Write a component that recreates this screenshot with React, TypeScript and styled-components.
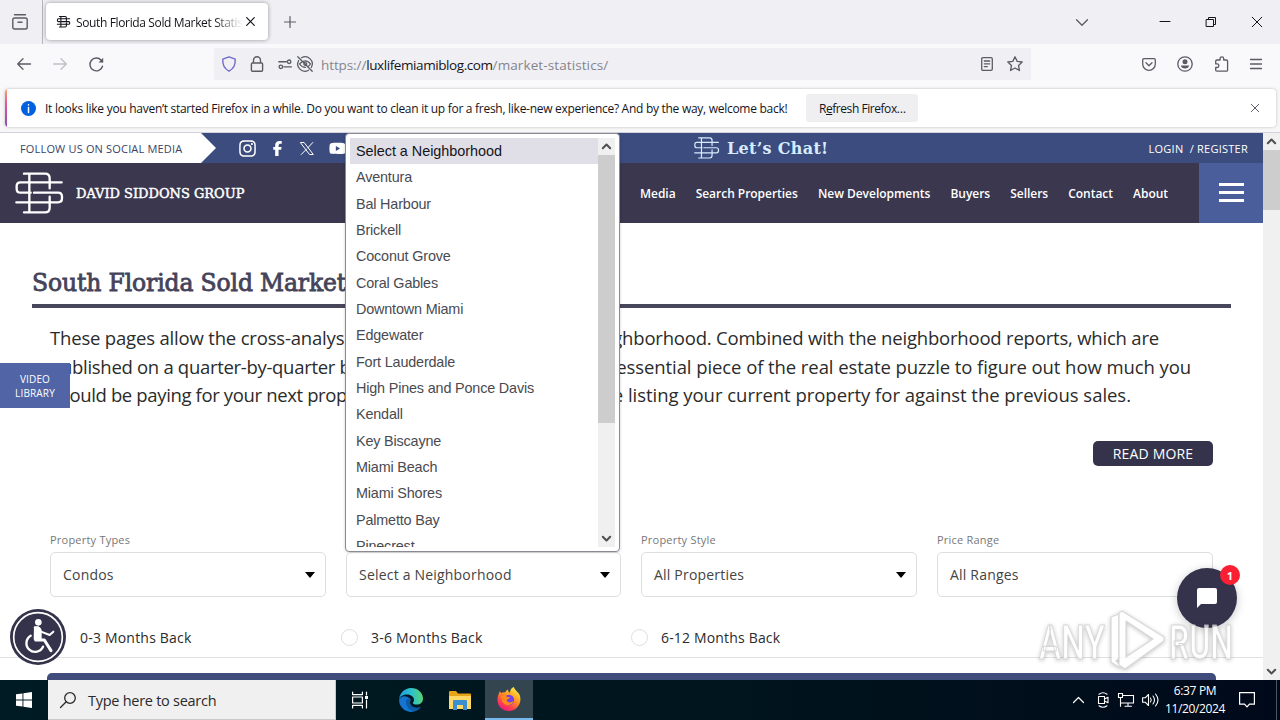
import React from "react"
import styled, { createGlobalStyle } from "styled-components"
import { FaInstagram, FaFacebookF, FaYoutube } from "react-icons/fa6"

const GlobalStyle = createGlobalStyle`
  * {
    box-sizing: border-box;
  }

  body {
    margin: 0;
    width: 1280px;
    height: 720px;
    overflow: hidden;
    background: #fff;
    font-family: "Open Sans", "Noto Sans", sans-serif;
  }
`

const Screen = styled.div`
  display: flex;
  flex-direction: column;
  width: 1280px;
  height: 720px;
  overflow: hidden;
`

const Text = styled.span<{ $size: number; $track?: number; $weight?: number; $color?: string }>`
  font-size: ${p => p.$size}px;
  letter-spacing: ${p => p.$track || 0}px;
  font-weight: ${p => p.$weight || 400};
  color: ${p => p.$color || "inherit"};
  white-space: pre;
`

const Svg = styled.svg`
  display: block;
  flex: none;
  overflow: visible;
  fill: none;
  stroke: currentColor;
  stroke-linecap: round;
  stroke-linejoin: round;
`

/* ---------- browser ---------- */

const TabStrip = styled.div`
  display: flex;
  flex: none;
  height: 44px;
  background: #f0f0f4;
  color: #5b5b66;
`

const FirefoxView = styled.div`
  display: flex;
  align-items: center;
  width: 43px;
  padding-left: 12px;
  border-right: 1px solid #b5b5bd;
`

const Tab = styled.div`
  display: flex;
  align-items: center;
  width: 222px;
  height: 37px;
  margin: 3px 0 0 3px;
  padding: 0 12px 0 11px;
  border-radius: 4px;
  background: #fff;
  box-shadow: 0 0 4px rgba(0, 0, 0, 0.38);
  color: #15141a;
`

const TabTitle = styled.div`
  width: 170px;
  margin-left: 6px;
  overflow: hidden;
  line-height: 18px;
  mask-image: linear-gradient(to right, #000 138px, transparent 167px);
`

const NewTab = styled.div`
  display: flex;
  align-items: center;
  margin-left: 16px;
`

const WindowButtons = styled.div`
  display: flex;
  align-items: center;
  margin-left: auto;
  padding-right: 18px;
  color: #15141a;
`

const Toolbar = styled.div`
  display: flex;
  flex: none;
  align-items: center;
  height: 44px;
  padding: 0 18px 4px 17px;
  background: #f9f9fb;
  color: #5b5b66;
`

const ToolGroup = styled.div<{ $gap: number }>`
  display: flex;
  align-items: center;
  gap: ${p => p.$gap}px;
`

const UrlBar = styled.div`
  display: flex;
  align-items: center;
  width: 817px;
  height: 32px;
  margin-left: 110px;
  padding: 0 8px 0 7px;
  border-radius: 2px;
  background: #f0f0f4;
`

const Url = styled.div`
  margin-left: 8px;
  color: #85858d;
`

const NoticeArea = styled.div`
  flex: none;
  height: 45px;
  padding: 1px 4px 0 5px;
  background: #f7f7f8;
  border-bottom: 1px solid #d2d3da;
`

const Notice = styled.div`
  position: relative;
  display: flex;
  align-items: center;
  height: 38px;
  padding: 0 17px 0 16px;
  background: #fff;
  border-radius: 4px;
  box-shadow: 0 0 3px rgba(0, 0, 0, 0.25);
  color: #15141a;
  overflow: hidden;

  &::before {
    content: "";
    position: absolute;
    left: 0;
    top: 0;
    width: 2px;
    height: 100%;
    background: linear-gradient(#f6a26b, #e2559a 40%, #8b4cc4);
  }
`

const NoticeButton = styled.div`
  width: 112px;
  height: 28px;
  margin-left: 19px;
  line-height: 27px;
  text-align: center;
  border-radius: 3px;
  background: #efeff1;
`

/* ---------- page ---------- */

const Viewport = styled.div`
  position: relative;
  display: flex;
  flex: none;
  height: 547px;
  overflow: hidden;
`

const Page = styled.div`
  width: 1263px;
  background: #fff;
`

const TopBar = styled.div`
  display: flex;
  height: 30px;
  background: #3c4c7e;
  color: #fff;
`

const Follow = styled.div`
  width: 216px;
  padding-left: 20px;
  line-height: 29px;
  background: #fff;
  color: #3a3f68;
  clip-path: polygon(0 0, 201px 0, 216px 50%, 201px 100%, 0 100%);
`

const Social = styled.div`
  display: grid;
  grid-template-columns: repeat(4, 30px);
  align-items: center;
  justify-items: center;
  width: 462px;
  margin-left: 16px;
`

const LetsChat = styled.div`
  display: flex;
  align-items: center;
  gap: 8px;
  color: #d6ecff;
`

const Slab = styled(Text)<{ $stroke?: number }>`
  font-family: "DejaVu Serif", serif;
  -webkit-text-stroke: ${p => p.$stroke || 0}px currentColor;
`

const Login = styled.div`
  margin-left: auto;
  padding-right: 15px;
  line-height: 29px;
`

const Header = styled.div`
  display: flex;
  align-items: center;
  height: 60px;
  background: #3a374f;
  color: #fff;
`

const Brand = styled.div`
  display: flex;
  align-items: center;
  gap: 13px;
  width: 640px;
  padding-left: 15px;
`

const Nav = styled.div`
  display: flex;
  flex: 1;
  justify-content: space-between;
  padding: 1px 31px 0 0;
`

const MenuButton = styled.div`
  display: flex;
  flex-direction: column;
  align-items: center;
  justify-content: center;
  gap: 5px;
  width: 64px;
  height: 60px;
  padding-bottom: 1px;
  background: #4a5e9c;
`

const MenuLine = styled.div`
  width: 25px;
  height: 3px;
  background: #fff;
`

const Title = styled.div`
  height: 85px;
  width: 1199px;
  margin-left: 32px;
  padding-top: 43px;
  line-height: 34px;
  border-bottom: 4px solid #47465a;
  color: #45435a;
`

const Intro = styled.div`
  margin: 16px 0 0 50px;
  color: #2b2b2b;
`

const IntroLine = styled.div<{ $width: number }>`
  display: flex;
  justify-content: space-between;
  width: ${p => p.$width}px;
  height: 28.5px;
  line-height: 28.5px;
`

const ReadMore = styled.div`
  width: 120px;
  height: 25px;
  margin: 31.5px 0 0 1093px;
  line-height: 25px;
  text-align: center;
  border-radius: 5px;
  background: #35334c;
  color: #fff;
`

const Filters = styled.div`
  display: grid;
  grid-template-columns: 276px 275px 276px 276px;
  gap: 20px;
  margin: 64px 0 0 50px;
`

const FilterLabel = styled.div`
  height: 22px;
  line-height: 17px;
  color: #777;
`

const Select = styled.div`
  display: flex;
  align-items: center;
  justify-content: space-between;
  height: 45px;
  padding: 0 10px 0 12px;
  border: 1px solid #dedede;
  border-radius: 5px;
  color: #444;
`

const Caret = styled.div`
  border: 5px solid transparent;
  border-top: 6px solid #000;
  border-bottom: 0;
`

const Periods = styled.div`
  display: flex;
  align-items: center;
  height: 61px;
  padding: 21px 0 0 80px;
  border-bottom: 1px solid #e0e0e0;
  color: #2b2b2b;
`

const Period = styled.div<{ $width: number }>`
  display: flex;
  align-items: center;
  gap: 13px;
  width: ${p => p.$width}px;
`

const Radio = styled.div`
  width: 17px;
  height: 17px;
  border: 1px solid #dedede;
  border-radius: 50%;
`

const Panel = styled.div`
  width: 1169px;
  height: 20px;
  margin: 15px 0 0 47px;
  border-radius: 5px;
  background: #3f4c7c;
`

const PageScroll = styled.div`
  display: flex;
  flex-direction: column;
  align-items: center;
  width: 17px;
  padding: 5px 0;
  background: #f0f0f0;
  color: #505050;
`

const Thumb = styled.div<{ $height: number }>`
  width: 17px;
  height: ${p => p.$height}px;
  margin: 6px 0 auto;
  background: #cdcdcd;
`

/* ---------- floating parts ---------- */

const Dropdown = styled.div`
  position: absolute;
  left: 345px;
  top: 0;
  display: flex;
  width: 275px;
  height: 419px;
  padding: 4px;
  border: 1px solid #8a8a93;
  border-radius: 4px;
  background: #fff;
  box-shadow: 0 0 3px rgba(0, 0, 0, 0.2);
`

const Options = styled.div`
  flex: 1;
  height: 409px;
  overflow: hidden;
  font-family: "Liberation Sans", Arial, sans-serif;
  color: #4a4a50;
`

const Option = styled.div<{ $selected: boolean }>`
  height: 26.35px;
  padding-left: 6px;
  line-height: 25.5px;
  background: ${p => (p.$selected ? "#e0dfe7" : "transparent")};
  color: ${p => (p.$selected ? "#15141a" : "inherit")};
`

const OptionScroll = styled(PageScroll)`
  height: 409px;
`

const VideoLibrary = styled.div`
  position: absolute;
  left: 0;
  top: 230px;
  width: 70px;
  height: 45px;
  padding-top: 9px;
  text-align: center;
  font-size: 10px;
  line-height: 14px;
  background: #5165a6;
  color: #fff;
`

const Accessibility = styled.div`
  position: absolute;
  left: 10px;
  top: 476px;
`

const Chat = styled.div`
  position: absolute;
  left: 1177px;
  top: 435px;
  display: flex;
  align-items: center;
  justify-content: center;
  width: 60px;
  height: 60px;
  border-radius: 50%;
  background: #35334c;
  box-shadow: 0 2px 10px rgba(0, 0, 0, 0.22);
`

const Badge = styled.div`
  position: absolute;
  right: -3px;
  top: -3px;
  width: 20px;
  height: 20px;
  border-radius: 50%;
  background: #fa1f33;
  color: #fff;
  line-height: 18px;
  text-align: center;
`

const Watermark = styled.div`
  position: absolute;
  left: 1036px;
  top: 475px;
  opacity: 0.75;

  text {
    font-family: "Roboto", sans-serif;
    font-size: 49px;
    font-weight: 500;
  }
`

/* ---------- taskbar ---------- */

const Taskbar = styled.div`
  display: flex;
  flex: none;
  height: 40px;
  background: linear-gradient(to right, #001b24, #00141d 60%, #00091a);
  color: #fff;
`

const TaskButton = styled.div<{ $width: number; $active?: boolean }>`
  display: flex;
  align-items: center;
  justify-content: center;
  width: ${p => p.$width}px;
  height: 40px;
  background: ${p => (p.$active ? "#33464f" : "transparent")};
  border-bottom: ${p => (p.$active ? "2px solid #76b9ed" : "0")};
`

const Search = styled.div`
  display: flex;
  align-items: center;
  gap: 12px;
  width: 288px;
  padding: 1px 0 0 12px;
  background: #f0f0f0;
  border: 1px solid #c9c9c9;
  border-top: 0;
  border-left: 0;
  color: #2a2a2a;
`

const Tray = styled.div`
  display: flex;
  align-items: center;
  gap: 8px;
  margin-left: auto;
`

const Clock = styled.div`
  display: flex;
  flex-direction: column;
  align-items: center;
  justify-content: space-between;
  width: 62px;
  height: 36px;
  margin-left: -3px;
  line-height: 18px;
`

const neighborhoods = [
  "Select a Neighborhood",
  "Aventura",
  "Bal Harbour",
  "Brickell",
  "Coconut Grove",
  "Coral Gables",
  "Downtown Miami",
  "Edgewater",
  "Fort Lauderdale",
  "High Pines and Ponce Davis",
  "Kendall",
  "Key Biscayne",
  "Miami Beach",
  "Miami Shores",
  "Palmetto Bay",
  "Pinecrest",
]

const navLinks = ["Media", "Search Properties", "New Developments", "Buyers", "Sellers", "Contact", "About"]

const filters = [
  { label: "Property Types", value: "Condos", caret: true },
  { label: "Neighborhood", value: "Select a Neighborhood", caret: true },
  { label: "Property Style", value: "All Properties", caret: true },
  { label: "Price Range", value: "All Ranges", caret: false },
]

const introLines = [
  {
    width: 1109,
    start: "These pages allow the cross-analysis",
    startTrack: -0.18,
    end: "neighborhood. Combined with the neighborhood reports, which are",
    endTrack: -0.2,
  },
  {
    width: 1141,
    start: "published on a quarter-by-quarter basis",
    startTrack: -0.3,
    end: "essential piece of the real estate puzzle to figure out how much you",
    endTrack: -0.08,
  },
  {
    width: 1081,
    start: "should be paying for your next property",
    startTrack: -0.36,
    end: "be listing your current property for against the previous sales.",
    endTrack: -0.03,
  },
]

function Monogram({ width, weight = 7 }: { width: number; weight?: number }) {
  return (
    <Svg width={width} height={width * 0.875} viewBox="46 126 144 126" strokeWidth={weight}>
      <path d="M73 131h63q14 0 14 14v30M150 200v33q0 14-14 14H73M89 131v116" />
      <path d="M186 157H62q-11 0-11 11v8q0 12 12 12h30M103 188h72q12 0 12 12v5q0 12-12 12H50" />
    </Svg>
  )
}

function ScrollArrow({ down }: { down?: boolean }) {
  return (
    <Svg width="9" height="6" viewBox="0 0 9 6" strokeWidth="2" strokeLinecap="butt">
      <path d={down ? "M.8.8l3.7 3.7L8.2.8" : "M.8 5.2l3.7-3.7 3.7 3.7"} />
    </Svg>
  )
}

function BrowserChrome() {
  return (
    <>
      <TabStrip>
        <FirefoxView>
          <Svg width="16" height="16" viewBox="0 0 16 16" strokeWidth="1.4">
            <path d="M2.5.8h11M2.6 4h10.8q1.8 0 1.8 1.8v7.4q0 1.8-1.8 1.8H2.6q-1.8 0-1.8-1.8V5.8Q.8 4 2.6 4zM6 8.3h4" />
          </Svg>
        </FirefoxView>
        <Tab>
          <Monogram width={13} weight={12} />
          <TabTitle>
            <Text $size={12} $track={-0.36}>South Florida Sold Market Statistics</Text>
          </TabTitle>
          <Svg width="9" height="9" viewBox="0 0 9 9" strokeWidth="1.2">
            <path d="M.7.7l7.6 7.6M8.3.7L.7 8.3" />
          </Svg>
        </Tab>
        <NewTab>
          <Svg width="12" height="12" viewBox="0 0 12 12" strokeWidth="1.2">
            <path d="M6 .5v11M.5 6h11" />
          </Svg>
        </NewTab>
        <WindowButtons>
          <Svg width="12" height="7" viewBox="0 0 12 7" strokeWidth="1.3" style={{ color: "#5b5b66", marginRight: 72 }}>
            <path d="M.5.7L6 6.2 11.5.7" />
          </Svg>
          <Svg width="10" height="10" viewBox="0 0 10 10" style={{ marginRight: 36 }}>
            <path d="M0 4.5h10" />
          </Svg>
          <Svg width="10" height="10" viewBox="0 0 10 10" style={{ marginRight: 36 }}>
            <path d="M.5 2.5h7v7h-7zM2.5 2.5v-2h7v7h-2" strokeLinejoin="miter" />
          </Svg>
          <Svg width="10" height="10" viewBox="0 0 10 10" strokeWidth="1">
            <path d="M.2.2l9.6 9.6M9.8.2L.2 9.8" />
          </Svg>
        </WindowButtons>
      </TabStrip>
      <Toolbar>
        <ToolGroup $gap={22}>
          <Svg width="14" height="12" viewBox="0 0 14 12" strokeWidth="1.3">
            <path d="M13.5 6H.7M6 .7L.7 6 6 11.3" />
          </Svg>
          <Svg width="14" height="12" viewBox="0 0 14 12" strokeWidth="1.3" style={{ color: "#bfbfc6" }}>
            <path d="M.5 6h12.8M8 .7L13.3 6 8 11.3" />
          </Svg>
          <Svg width="15" height="15" viewBox="0 0 15 15" strokeWidth="1.4">
            <path d="M13.5 9.2a6.4 6.4 0 1 1-1.3-5.9l1.3 1.4" />
            <path d="M14.2.8v4.7H9.5z" fill="currentColor" stroke="none" />
          </Svg>
        </ToolGroup>
        <UrlBar>
          <Svg width="16" height="16" viewBox="0 0 16 16" strokeWidth="1.4" style={{ color: "#6f6acb" }}>
            <path d="M8 .8l6.2 2.3c.4 5-1.6 9.6-6.2 12.1C3.4 12.700 1.400 8.100 1.800 3.100z" />
          </Svg>
          <Svg width="14" height="16" viewBox="0 0 14 16" strokeWidth="1.4" style={{ marginLeft: 13 }}>
            <path d="M3.5 7V4.200a3.500 3.500 0 0 1 7 0V7M2.400 7h9.200q1 0 1 1v6q0 1.200-1 1.200H2.400q-1 0-1-1.200V8q0-1 1-1z" />
          </Svg>
          <Svg width="14" height="11" viewBox="0 0 15 12" strokeWidth="1.4" style={{ marginLeft: 14 }}>
            <path d="M.7 3h8.300M6.200 8.500h8.300" />
            <circle cx="12" cy="3" r="1.900" />
            <circle cx="3" cy="8.500" r="1.900" />
          </Svg>
          <Svg width="16" height="16" viewBox="0 0 16 16" strokeWidth="1.3" style={{ marginLeft: 5 }}>
            <path d="M4.500 1.700A7.200 7.200 0 0 1 14.300 11.500M11.500 14.300A7.200 7.200 0 0 1 1.700 4.500M.8.800l14.400 14.400M2.600 8q2.200-3 5.400-3.200Q11.600 5 13.400 8 12.700 9.300 11.600 10M3 8.500q1.800 2.800 5.500 2.800" />
            <circle cx="8.300" cy="8" r="1.400" />
          </Svg>
          <Url>
            <Text $size={13.5} $track={-0.1}>https://</Text>
            <Text $size={13.5} $track={-0.42} $color="#15141a">luxlifemiamiblog.com</Text>
            <Text $size={13.5} $track={0.1}>/market-statistics/</Text>
          </Url>
          <ToolGroup $gap={14} style={{ marginLeft: "auto" }}>
            <Svg width="12" height="14" viewBox="0 0 12 14" strokeWidth="1.3">
              <path d="M2 .7h8q1.300 0 1.300 1.300v10q0 1.300-1.300 1.300H2Q.7 13.300.7 12V2Q.7.700 2 .7zM3.300 4h5.400M3.300 6.800h5.400M3.300 9.600h3" />
            </Svg>
            <Svg width="16" height="16" viewBox="0 0 16 16" strokeWidth="1.3">
              <path d="M8 .8l2.200 4.600 5 .6-3.700 3.500 1 5L8 12l-4.500 2.500 1-5L.8 6l5-.6z" />
            </Svg>
          </ToolGroup>
        </UrlBar>
        <ToolGroup $gap={21} style={{ marginLeft: "auto" }}>
          <Svg width="14" height="13" viewBox="0 0 14 13" strokeWidth="1.3">
            <path d="M2 .7h10q1.300 0 1.300 1.300v4a6.300 6.300 0 0 1-12.600 0V2Q.7.700 2 .7zM4 4.800l3 2.900 3-2.900" />
          </Svg>
          <Svg width="16" height="16" viewBox="0 0 16 16" strokeWidth="1.3">
            <circle cx="8" cy="8" r="7.200" />
            <circle cx="8" cy="5.700" r="2.500" fill="currentColor" stroke="none" />
            <path d="M3.800 9.500h8.400Q11.500 12.500 8 12.500T3.800 9.500z" fill="currentColor" stroke="none" />
          </Svg>
          <Svg width="15" height="16" viewBox="0 0 15 16" strokeWidth="1.3">
            <path d="M1.700 5.200q0-1.200 1.200-1.200h3.200V2.600a1.800 1.800 0 0 1 3.600 0V4h2.600q1.300 0 1.300 1.300v8.700q0 1.200-1.300 1.200H2.900q-1.200 0-1.200-1.200v-2.500h1.400a1.800 1.800 0 0 0 0-3.600H1.700z" />
          </Svg>
          <Svg width="12" height="10" viewBox="0 0 12 10" strokeWidth="1.3">
            <path d="M.5.500h11M.5 5h11M.5 9.500h11" />
          </Svg>
        </ToolGroup>
      </Toolbar>
      <NoticeArea>
        <Notice>
          <Svg width="15" height="15" viewBox="0 0 15 15" style={{ marginRight: 9 }}>
            <circle cx="7.500" cy="7.500" r="7.500" fill="#0060df" stroke="none" />
            <path d="M7.500 6.500v5M7.500 3.800v.1" stroke="#fff" strokeWidth="1.5" />
          </Svg>
          <Text $size={12} $track={-0.28}>
            It looks like you haven’t started Firefox in a while. Do you want to clean it up for a fresh, like-new experience? And by the way, welcome back!
          </Text>
          <NoticeButton>
            <Text $size={12} $track={-0.45}>R<u>e</u>fresh Firefox…</Text>
          </NoticeButton>
          <Svg width="8" height="8" viewBox="0 0 8 8" strokeWidth="1" style={{ marginLeft: "auto", color: "#5b5b66" }}>
            <path d="M.3.300l7.400 7.400M7.700.300L.3 7.700" />
          </Svg>
        </Notice>
      </NoticeArea>
    </>
  )
}

function WebPage() {
  return (
    <Page>
      <TopBar>
        <Follow>
          <Text $size={11} $track={0.17}>FOLLOW US ON SOCIAL MEDIA</Text>
        </Follow>
        <Social>
          <FaInstagram size={19} />
          <FaFacebookF size={15} />
          <Svg width="14" height="13" viewBox="0 0 14 13" strokeWidth="1">
            <path d="M.7.500h3.400l9.200 12H9.900zM12.800.500L7.700 6M6.300 7.400L1.200 12.500" />
          </Svg>
          <FaYoutube size={17} />
        </Social>
        <LetsChat>
          <Monogram width={25} />
          <Slab $size={16} $track={0.3} $weight={700}>Let’s Chat!</Slab>
        </LetsChat>
        <Login>
          <Text $size={11} $track={0.25}>LOGIN  / REGISTER</Text>
        </Login>
      </TopBar>
      <Header>
        <Brand>
          <Monogram width={48} />
          <Slab $size={13} $track={-0.02} $stroke={0.45}>DAVID SIDDONS GROUP</Slab>
        </Brand>
        <Nav>
          {navLinks.map(link => (
            <Text key={link} $size={12} $weight={600} $track={-0.03}>{link}</Text>
          ))}
        </Nav>
        <MenuButton>
          <MenuLine />
          <MenuLine />
          <MenuLine />
        </MenuButton>
      </Header>
      <Title>
        <Slab $size={23.5} $track={-0.15} $stroke={0.8}>South Florida Sold Market</Slab>
      </Title>
      <Intro>
        {introLines.map(line => (
          <IntroLine key={line.start} $width={line.width}>
            <Text $size={18.5} $track={line.startTrack}>{line.start}</Text>
            <Text $size={18.5} $track={line.endTrack}>{line.end}</Text>
          </IntroLine>
        ))}
      </Intro>
      <ReadMore>
        <Text $size={14} $track={0.15}>READ MORE</Text>
      </ReadMore>
      <Filters>
        {filters.map(filter => (
          <div key={filter.label}>
            <FilterLabel>
              <Text $size={11} $track={0.22}>{filter.label}</Text>
            </FilterLabel>
            <Select>
              <Text $size={14} $track={0.2}>{filter.value}</Text>
              {filter.caret && <Caret />}
            </Select>
          </div>
        ))}
      </Filters>
      <Periods>
        <Period $width={261}>
          <Text $size={14} $track={0.2}>0-3 Months Back</Text>
        </Period>
        <Period $width={290}>
          <Radio />
          <Text $size={14} $track={0.2}>3-6 Months Back</Text>
        </Period>
        <Period $width={290}>
          <Radio />
          <Text $size={14} $track={0.17}>6-12 Months Back</Text>
        </Period>
      </Periods>
      <Panel />
    </Page>
  )
}

function Overlays() {
  return (
    <>
      <VideoLibrary>
        <Text $size={10} $weight={500} $track={0.15}>{"VIDEO\nLIBRARY"}</Text>
      </VideoLibrary>
      <Accessibility>
        <Svg width="56" height="56" viewBox="29 266 168 168">
          <circle cx="113" cy="350" r="84" fill="#35334c" stroke="none" />
          <circle cx="113" cy="350" r="73" stroke="#fff" strokeWidth="5" />
          <circle cx="114" cy="306" r="10" fill="#fff" stroke="none" />
          <path d="M106 325v34h26l20 32" stroke="#fff" strokeWidth="9" />
          <path d="M103 322h10q7 0 9 12l26 10 11-10" stroke="#fff" strokeWidth="6" />
          <path d="M103 320h11l8 16v20h-20z" fill="#fff" stroke="#fff" strokeWidth="4" />
          <path d="M91 346a26 26 0 1 0 37 33" stroke="#fff" strokeWidth="7" />
        </Svg>
      </Accessibility>
      <Dropdown>
        <Options>
          {neighborhoods.map((name, i) => (
            <Option key={name} $selected={i === 0}>
              <Text $size={14.4} $track={i === 0 ? -0.02 : -0.17}>{name}</Text>
            </Option>
          ))}
        </Options>
        <OptionScroll>
          <ScrollArrow />
          <Thumb $height={268} />
          <ScrollArrow down />
        </OptionScroll>
      </Dropdown>
      <Chat>
        <Svg width="20" height="20" viewBox="0 0 20 20">
          <path d="M2 0h16q2 0 2 2v12q0 2-2 2H4l-4 4V2q0-2 2-2z" fill="#fff" stroke="none" />
        </Svg>
        <Badge>
          <Text $size={11} $weight={700}>1</Text>
        </Badge>
      </Chat>
      <Watermark>
        <Svg width="200" height="64" viewBox="0 0 200 64" strokeWidth="1.2" style={{ filter: "drop-shadow(0 1px 2px rgba(0,0,0,.3))" }}>
          <g fill="#fff" stroke="#ccc">
            <text x="3" y="51" textLength="66" lengthAdjust="spacingAndGlyphs">ANY</text>
            <text x="133" y="51" textLength="64" lengthAdjust="spacingAndGlyphs">RUN</text>
            <path d="M75 9l8-3v44l-3 3 5 5-2 1-8-5z" />
            <path fillRule="evenodd" d="M86 3l42 26v4L89 61l-6-4V5zM90 13v36l27-18z" />
          </g>
        </Svg>
      </Watermark>
    </>
  )
}

function WindowsTaskbar() {
  return (
    <Taskbar>
      <TaskButton $width={48}>
        <Svg width="16" height="16" viewBox="0 0 16 16">
          <path fill="#fff" stroke="none" d="M0 2.300L6.500 1.400V7.600H0zM7.400 1.300L16 0v7.600H7.400zM0 8.400h6.500v6.200L0 13.700zM7.400 8.400H16V16l-8.600-1.300z" />
        </Svg>
      </TaskButton>
      <Search>
        <Svg width="16" height="16" viewBox="0 0 16 16" strokeWidth="1.3">
          <circle cx="10" cy="6" r="5.300" />
          <path d="M6.200 9.800L.5 15.500" />
        </Svg>
        <Text $size={14.5} $track={-0.27}>Type here to search</Text>
      </Search>
      <TaskButton $width={48}>
        <Svg width="16" height="16" viewBox="0 0 16 16" strokeWidth="1.2" strokeLinecap="butt">
          <path d="M.6 0v2.600h9.800V0M.6 5h9.800v6H.6zM.6 16v-2.600h9.800V16M14.500 0v3M14.500 8v8" />
          <path d="M13 4h3v3h-3z" fill="#fff" stroke="none" />
        </Svg>
      </TaskButton>
      <TaskButton $width={53}>
        <Svg width="24" height="24" viewBox="0 0 24 24">
          <defs>
            <linearGradient id="edge" x1="0" y1="0.3" x2="1" y2="0.2">
              <stop offset="0" stopColor="#1b9de2" />
              <stop offset="0.5" stopColor="#2cc0d0" />
              <stop offset="1" stopColor="#5bd667" />
            </linearGradient>
          </defs>
          <path fill="#1474cf" stroke="none" d="M0 12a12 12 0 0 0 21.700 7c-4 2-10 .7-10.700-4-.3-2 .8-3 .8-3C9 7 1 7 0 12z" />
          <path fill="#0c59a4" stroke="none" d="M7 14c0 5 4 9 9 9 2.500-.700 4.500-2.300 5.700-4C17 21 11.500 19 11 15c-.2-2 .8-3 .8-3C9 10 7 11.500 7 14z" />
          <path fill="url(#edge)" stroke="none" d="M0 11.500C.6 5 5.700 0 12 0c7 0 12 5 12 10.500 0 4-3 6-6.200 6-2.600 0-4-.9-4-1.600 0-.6 1.200-1 1.200-3C15 9 12 6.500 8 6.500c-4.500 0-7.500 2.500-8 5z" />
        </Svg>
      </TaskButton>
      <TaskButton $width={48}>
        <Svg width="22" height="19" viewBox="0 0 22 19" style={{ marginRight: 2 }}>
          <g stroke="none">
            <path fill="#e8a317" d="M0 1q0-1 1-1h6l2 2.500h12q1 0 1 1V7H0z" />
            <path fill="#ffd866" d="M0 5h22v13H0z" />
            <path fill="#3b8ed0" d="M4 10q0-1 1-1h12q1 0 1 1v9h-4v-5H8v5H4z" />
            <path fill="#ffd866" d="M8 14h6v4H8z" />
          </g>
        </Svg>
      </TaskButton>
      <TaskButton $width={48} $active>
        <Svg width="24" height="24" viewBox="0 0 24 24">
          <defs>
            <linearGradient id="fox" x1="0.8" y1="0" x2="0.2" y2="1">
              <stop offset="0" stopColor="#fff04a" />
              <stop offset="0.4" stopColor="#ff9a1f" />
              <stop offset="0.75" stopColor="#ff3b52" />
              <stop offset="1" stopColor="#e3168a" />
            </linearGradient>
          </defs>
          <path fill="url(#fox)" stroke="none" d="M3 4c.3 1 .7 1.600 1.200 2C5.500 5.400 7 5.200 8 5.500 9 3.500 10.500 2.500 11 2.400c0 1.600.5 2.500 2 3.200C13 3 14.500.600 17 0c0 3 5 5 6 9 2 8-3.500 15-11 15S0 18 .5 12C.8 8.500 2 6 3 4z" />
          <circle cx="12" cy="13" r="5.200" fill="#7542e5" stroke="none" />
          <path fill="#ff8a1a" stroke="none" d="M4 9c3-1.500 5-.5 6 1l3 .3c-.6 2-3 1.700-3.500 3 1.500 3 5 2.300 7 .7C16 19 7 20 5 14z" />
        </Svg>
      </TaskButton>
      <Tray>
        <Svg width="11" height="6" viewBox="0 0 11 6" strokeWidth="1.2" style={{ marginRight: 5 }}>
          <path d="M.5 5.500l5-5 5 5" />
        </Svg>
        <Svg width="12" height="16" viewBox="0 0 12 16" strokeWidth="1.1" style={{ marginRight: 1 }}>
          <path d="M2 2.200q4-2.800 8 0M2 13.800q4 2.800 8 0M1.500 4.500h6v7h-6zM7.500 7l3.500-1.800v5.600L7.500 9" />
        </Svg>
        <Svg width="16" height="14" viewBox="0 0 16 14" strokeWidth="1.1">
          <path d="M5 2.500h10.500v7.500H5M10 10v3M7 13.300h6.500M.5.500h4v4h-4zM2.500 4.500v8.800M2.500 10H5" strokeLinejoin="miter" />
        </Svg>
        <Svg width="17" height="14" viewBox="0 0 17 14" strokeWidth="1.1">
          <path d="M.6 4.800h2.600l3.300-3.300v11L3.200 9.200H.6zM8.500 5q1.500 2 0 4M11 3q3 4 0 8M13.500 1q5 6 0 12" />
        </Svg>
        <Clock>
          <Text $size={12} $track={-0.35}>6:37 PM</Text>
          <Text $size={12} $track={-0.35}>11/20/2024</Text>
        </Clock>
        <Svg width="16" height="16" viewBox="0 0 16 16" strokeWidth="1.2" style={{ margin: "0 21px 0 5px" }}>
          <path d="M.6.600h14.800v11.500H10.500L8 14.800l-2.500-2.700H.6z" strokeLinejoin="miter" />
        </Svg>
        <div style={{ width: 4, height: 40, marginLeft: -8, borderLeft: "1px solid #4c5560" }} />
      </Tray>
    </Taskbar>
  )
}

export default function App() {
  return (
    <>
      <GlobalStyle />
      <Screen>
        <BrowserChrome />
        <Viewport>
          <WebPage />
          <PageScroll>
            <ScrollArrow />
            <Thumb $height={60} />
            <ScrollArrow down />
          </PageScroll>
          <Overlays />
        </Viewport>
        <WindowsTaskbar />
      </Screen>
    </>
  )
}
